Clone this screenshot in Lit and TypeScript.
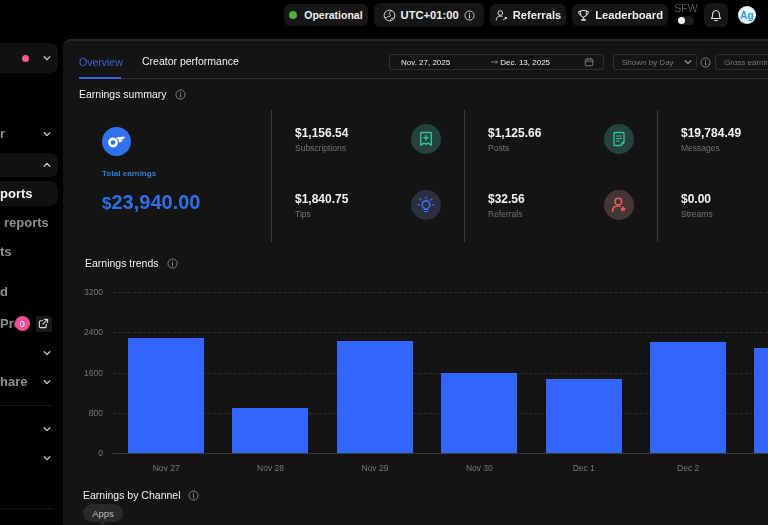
import { LitElement, html, css, svg } from "lit";
import { customElement } from "lit/decorators.js";

const chevDown = html`<svg class="chev" viewBox="0 0 10 10" width="8" height="8"><path d="M1.500 3.500 5 7l3.500-3.500" fill="none" stroke="currentColor" stroke-width="1.600" stroke-linecap="round" stroke-linejoin="round"/></svg>`;
const chevUp = html`<svg class="chev" viewBox="0 0 10 10" width="8" height="8"><path d="M1.500 6.500 5 3l3.500 3.500" fill="none" stroke="currentColor" stroke-width="1.600" stroke-linecap="round" stroke-linejoin="round"/></svg>`;
const info = (s = 11) => html`<svg viewBox="0 0 12 12" width=${s} height=${s} class="info"><circle cx="6" cy="6" r="5" fill="none" stroke="currentColor" stroke-width="1"/><path d="M6 5.400v3" stroke="currentColor" stroke-width="1.100" stroke-linecap="round"/><circle cx="6" cy="3.600" r=".7" fill="currentColor"/></svg>`;

const ICONS: Record<string, unknown> = {
  sub: svg`<path d="M4.500 2.500h9a.8.8 0 0 1 .8.8v11.900l-3-1.900a1 1 0 0 0-1.100 0L9 14.400l-1.200-1.100a1 1 0 0 0-1.100 0l-3 1.900V3.300a.8.8 0 0 1 .8-.8Z" fill="none" stroke="currentColor" stroke-width="1.500" stroke-linejoin="round"/><path d="M9 5.500v4.500M6.800 7.700h4.400" stroke="currentColor" stroke-width="1.500" stroke-linecap="round"/>`,
  post: svg`<path d="M11 15.500H5a1 1 0 0 1-1-1v-11a1 1 0 0 1 1-1h8a1 1 0 0 1 1 1v9Z" fill="none" stroke="currentColor" stroke-width="1.400" stroke-linejoin="round"/><path d="M6.500 6h5M6.500 8.500h5M6.500 11h3" stroke="currentColor" stroke-width="1.200" stroke-linecap="round"/><path d="M11.500 15.500 15 12l-3.500-.2Z" fill="currentColor"/>`,
  tip: svg`<path d="M9 4.800a3.900 3.900 0 0 0-2.300 7c.5.4.7.9.7 1.500h3.200c0-.6.2-1.100.7-1.500a3.900 3.900 0 0 0-2.300-7Z" fill="none" stroke="currentColor" stroke-width="1.400"/><path d="M7.500 15.500h3M9 1v1.500M3 3l1.200 1.200M15 3l-1.200 1.200M1 8.800h1.500M15.500 8.800H17" stroke="currentColor" stroke-width="1.200" stroke-linecap="round"/>`,
  ref: svg`<circle cx="8.300" cy="5.500" r="3.300" fill="none" stroke="currentColor" stroke-width="1.500"/><path d="M2.500 15.500c0-3.600 2.300-5.600 5.300-5.600 1 0 1.700.2 2.300.5" fill="none" stroke="currentColor" stroke-width="1.500" stroke-linecap="round"/><path d="m13 10 1 1.800 1.900.3-1.400 1.300.4 2-1.900-1-1.900 1 .4-2-1.400-1.300 1.900-.3Z" fill="currentColor"/>`,
};

interface Stat { value: string; label: string; icon: string; color: string; bg: string }
const STATS: Stat[] = [
  { value: "$1,156.54", label: "Subscriptions", icon: "sub", color: "#2fc09a", bg: "#26423c" },
  { value: "$1,125.66", label: "Posts", icon: "post", color: "#2fc09a", bg: "#26423c" },
  { value: "$19,784.49", label: "Messages", icon: "", color: "", bg: "" },
  { value: "$1,840.75", label: "Tips", icon: "tip", color: "#3f6df0", bg: "#2a2f42" },
  { value: "$32.56", label: "Referrals", icon: "ref", color: "#ee5a5a", bg: "#463536" },
  { value: "$0.00", label: "Streams", icon: "", color: "", bg: "" },
];

const BARS = [
  { label: "Nov 27", v: 2290 }, { label: "Nov 28", v: 890 }, { label: "Nov 29", v: 2230 },
  { label: "Nov 30", v: 1590 }, { label: "Dec 1", v: 1470 }, { label: "Dec 2", v: 2210 }, { label: "", v: 2090 },
];

interface Row { text?: string; cls?: string; chev?: "d" | "u"; pro?: boolean }
const ROWS: Row[] = [
  { text: "r", chev: "d", cls: "first" },
  { chev: "u", cls: "box" },
  { text: "ports", cls: "box active" },
  { text: "reports", cls: "np" },
  { text: "ts" },
  { text: "d", cls: "far" },
  { text: "Pro", pro: true, cls: "pro-row" },
  { chev: "d" },
  { text: "hare", chev: "d" },
];

@customElement("app-root")
export class AppRoot extends LitElement {
  static styles = css`
    :host { display: block; width: 768px; height: 525px; overflow: hidden; background: #000; color: #fff;
      font-family: "Liberation Sans", Arial, sans-serif; }
    .page { height: 525px; filter: blur(.25px); }
    .top { height: 39px; display: flex; align-items: flex-start; justify-content: flex-end; gap: 6px; padding: 3px 12px 0 0; box-sizing: border-box; }
    .pill { height: 22px; margin-top: 1px; display: flex; align-items: center; gap: 5px; padding: 0 5px; background: #161616; border-radius: 6px; font-size: 11.200px; font-weight: 700; color: #efefef; white-space: nowrap; }
    .pill.tall { height: 24px; margin-top: 0; }
    .pill.status { gap: 7px; font-size: 10.500px; }
    .pill.utc { padding: 0 9px; }
    .pill svg { color: #e5e5e5; flex: none; }
    .pill .info { color: #d0d0d0; }
    .dot { width: 8px; height: 8px; border-radius: 50%; background: #4caf3f; }
    .sfw { width: 24px; display: flex; flex-direction: column; align-items: center; font-size: 10.500px; line-height: 11px; color: #555; font-weight: 400; }
    .toggle { width: 16px; height: 9px; margin-top: 2px; border-radius: 5px; background: #1c1c1c; display: flex; align-items: center; }
    .toggle i { width: 7px; height: 7px; border-radius: 50%; background: #f2f2f2; }
    .bell { width: 24px; height: 24px; justify-content: center; padding: 0; }
    .avatar { width: 18px; height: 18px; border-radius: 50%; background: #eaf6ff; color: #1f9bef; font-size: 10px; font-weight: 700; display: flex; align-items: center; justify-content: center; margin: 3px 0 0 4px; }

    .body { display: flex; height: 486px; }
    .side { width: 63px; flex: none; overflow: hidden; box-sizing: border-box; padding: 4px 5px 0 0; }
    .account { height: 30px; background: #111; border-radius: 0 8px 8px 0; display: flex; align-items: center; justify-content: flex-end; gap: 14px; padding-right: 7px; }
    .pink { width: 7px; height: 7px; border-radius: 50%; background: #ef5b92; }
    .row { height: 25px; margin-top: 4px; display: flex; align-items: center; padding-right: 7px; color: #8f8f8f; font-size: 13px; font-weight: 700; white-space: nowrap; overflow: hidden; }
    .row .chev { margin-left: auto; }
    .row.first { margin-top: 48px; }
    .row.box { height: 24px; margin-top: 7px; background: #111; border-radius: 0 8px 8px 0; }
    .row.active { height: 25px; margin-top: 4px; color: #f4f4f4; }
    .row.np { padding-left: 4px; }
    .row.far { margin-top: 15px; }
    .row.pro-row { margin-top: 7px; overflow: visible; padding-right: 5px; }
    .chev { color: #c9c9c9; flex: none; }
    .pro { display: flex; align-items: center; flex: 1; min-width: 0; }
    .badge { width: 15px; height: 15px; border-radius: 50%; background: #ee4f95; color: #fff; font-size: 9px; font-weight: 400; display: flex; align-items: center; justify-content: center; margin-left: -7px; flex: none; position: relative; }
    .ext { width: 16px; height: 16px; background: #1a1a1a; border-radius: 3px; display: flex; align-items: center; justify-content: center; color: #ddd; margin-left: 6px; flex: none; }
    .sep { height: 1px; background: #161616; margin: 11px 5px 0 0; }
    .sep.low { margin-top: 38px; }
    .side-chevs .row:first-child { margin-top: 10px; }

    .main { flex: 1; min-width: 0; background: #141414; border-radius: 8px 0 0 0; border-top: 2px solid #262626; box-sizing: border-box; overflow: hidden; padding: 0 0 0 16px; }
    .tabbar { height: 37px; width: 689px; display: flex; align-items: center; border-bottom: 1px solid #2e2e2e; font-size: 10.500px; }
    .tab { height: 100%; display: flex; align-items: center; color: #eee; white-space: nowrap; padding-top: 3px; box-sizing: border-box; }
    .tab.on { color: #3a62d8; box-shadow: inset 0 -2px 0 #3a62d8; margin-bottom: -1px; height: calc(100% + 1px); width: 42px; margin-right: 21px; }
    .tab.next { width: 95px; }
    .date { margin-left: 152px; margin-top: 5px; width: 215px; height: 16px; box-sizing: border-box; border: 1px solid #2e2e2e; border-radius: 3px; display: flex; align-items: center; font-size: 8px; color: #eee; padding: 0 9px 0 11px; flex: none; }
    .date .to { margin-left: 41px; display: flex; align-items: center; gap: 1px; }
    .date svg:last-child { margin-left: auto; color: #888; }
    .sel { height: 16px; margin-top: 5px; box-sizing: border-box; border: 1px solid #2e2e2e; border-radius: 3px; display: flex; align-items: center; font-size: 8px; color: #777; padding: 0 4px 0 8px; flex: none; white-space: nowrap; }
    .sel.by { width: 84px; margin-left: 9px; justify-content: space-between; }
    .sel.by .chev { color: #999; }
    .infoBtn { margin: 5px 4px 0 3px; color: #888; display: flex; }
    .sel.gross { width: 80px; overflow: hidden; }
    .title { display: flex; align-items: center; gap: 8px; font-size: 10.500px; color: #f0f0f0; white-space: nowrap; }
    .info { color: #888; flex: none; }
    .sumTitle { height: 16px; margin-top: 7px; }
    .summary { display: flex; margin-top: 8px; height: 132px; }
    .total { width: 192px; flex: none; box-sizing: border-box; padding: 17px 0 0 23px; }
    .logo { display: block; width: 29px; height: 29px; }
    .tl { font-size: 8px; font-weight: 700; color: #2b7fd4; margin-top: 13px; line-height: 10px; white-space: nowrap; }
    .amount { font-size: 20px; font-weight: 700; color: #2f6fe8; margin-top: 11px; line-height: 24px; white-space: nowrap; }
    .amount span { font-size: 17px; }
    .stats { display: grid; grid-template-columns: repeat(3, 193px); flex: none; }
    .stat { border-left: 1px solid #3c3c3c; display: grid; grid-template-rows: 66px 66px; }
    .cell { padding: 14px 0 0 23px; display: flex; justify-content: space-between; box-sizing: border-box; width: 192px; }
    .txt { padding-top: 1px; }
    .val { font-size: 12px; font-weight: 700; color: #f2f2f2; line-height: 17px; white-space: nowrap; }
    .lab { font-size: 8.500px; color: #727272; line-height: 12px; white-space: nowrap; }
    .circle { width: 30px; height: 30px; border-radius: 50%; display: flex; align-items: center; justify-content: center; margin: 0 23px 0 0; flex: none; }

    .trendTitle { height: 16px; margin: 13px 0 0 6px; }
    .chart { position: relative; height: 205px; margin-top: 12px; width: 689px; }
    .grid { position: absolute; left: 34px; right: 0; top: 9px; height: 162px; display: flex; flex-direction: column; justify-content: space-between; }
    .gl { height: 0; border-top: 1px dashed #2e2e2e; }
    .gl.base { border-top: 1px solid #383838; }
    .yaxis { position: absolute; left: 0; top: 3px; width: 24px; height: 173px; display: flex; flex-direction: column; justify-content: space-between; align-items: flex-end; font-size: 8.500px; line-height: 12px; color: #777; }
    .bars { position: absolute; left: 49px; top: 9px; height: 161px; display: flex; align-items: flex-end; gap: 28.400px; }
    .bar { width: 76px; background: #3366ff; flex: none; }
    .xaxis { position: absolute; left: 35px; top: 179px; display: flex; }
    .xaxis span { width: 104.400px; text-align: center; font-size: 8.500px; color: #777; flex: none; line-height: 12px; }
    .chanTitle { height: 14px; margin: 0 0 0 4px; }
    .apps { position: relative; width: 40px; height: 18px; margin: 2px 0 0 4px; border-radius: 9px; background: #292929; color: #b8b8b8; font-size: 9.500px; display: flex; align-items: center; justify-content: center; }
    .apps::after { content: ""; position: absolute; left: 16px; bottom: -3px; border: 4px solid transparent; border-top-color: #292929; border-bottom: 0; }
  `;

  private renderRow(r: Row) {
    return html`<div class="row ${r.cls ?? ""}">
      ${r.pro
        ? html`<div class="pro"><span>${r.text}</span><div class="badge">0</div>
            <div class="ext"><svg viewBox="0 0 12 12" width="11" height="11"><path d="M9 7v2.500a1 1 0 0 1-1 1H2.500a1 1 0 0 1-1-1V4a1 1 0 0 1 1-1H5M7 1.500h3.500V5M10.500 1.500 5.500 6.500" fill="none" stroke="currentColor" stroke-width="1.200" stroke-linecap="round" stroke-linejoin="round"/></svg></div></div>`
        : html`${r.text ? html`<span>${r.text}</span>` : ""}`}
      ${r.chev === "d" ? chevDown : r.chev === "u" ? chevUp : ""}
    </div>`;
  }

  private renderStat(s: Stat) {
    return html`<div class="cell">
      <div class="txt"><div class="val">${s.value}</div><div class="lab">${s.label}</div></div>
      ${s.icon ? html`<div class="circle" style="background:${s.bg};color:${s.color}"><svg viewBox="0 0 18 18" width="18" height="18">${ICONS[s.icon]}</svg></div>` : ""}
    </div>`;
  }

  render() {
    const cols = [0, 1, 2];
    return html`<div class="page">
      <div class="top">
        <div class="pill status"><span class="dot"></span>Operational</div>
        <div class="pill tall utc">
          <svg viewBox="0 0 14 14" width="13" height="13"><circle cx="7" cy="7" r="5.800" fill="none" stroke="currentColor" stroke-width="1"/><path d="M2 9.500c2 .5 2.500-1 3.500-1.500s2 .5 2.500-.5-1.500-2-1-3.500S9 2 9.500 2M8 12.500c0-1.500 1-2.500 2-2.500s2 0 2.300-1" fill="none" stroke="currentColor" stroke-width="1"/></svg>
          UTC+01:00 ${info(11)}
        </div>
        <div class="pill">
          <svg viewBox="0 0 16 16" width="13" height="13"><circle cx="6.500" cy="5" r="2.800" fill="none" stroke="currentColor" stroke-width="1.200"/><path d="M1.500 13.500c0-3 2-4.800 5-4.800 1 0 1.700.2 2.300.5" fill="none" stroke="currentColor" stroke-width="1.200" stroke-linecap="round"/><path d="M10 13.500l4-3M12 10.300l2 .2-.3 2" fill="none" stroke="currentColor" stroke-width="1.200"/></svg>
          Referrals
        </div>
        <div class="pill">
          <svg viewBox="0 0 16 16" width="13" height="13"><path d="M4.500 2h7v4.500a3.500 3.500 0 0 1-7 0ZM4.500 3H2c0 3 1 4.500 3 4.500M11.500 3H14c0 3-1 4.500-3 4.500M8 10v2.500M5.500 14h5l-.6-1.500H6.100Z" fill="none" stroke="currentColor" stroke-width="1.200" stroke-linejoin="round"/></svg>
          Leaderboard
        </div>
        <div class="sfw">SFW<div class="toggle"><i></i></div></div>
        <div class="pill bell tall"><svg viewBox="0 0 14 14" width="14" height="14"><path d="M2.500 10.500c.8-.8 1-1.500 1-3.500 0-2.300 1.500-4.500 3.500-4.500s3.500 2.200 3.500 4.500c0 2 .2 2.700 1 3.500ZM5.800 12.500h2.400" fill="none" stroke="currentColor" stroke-width="1.100" stroke-linejoin="round" stroke-linecap="round"/></svg></div>
        <div class="avatar">Ag</div>
      </div>
      <div class="body">
        <div class="side">
          <div class="account"><span class="pink"></span>${chevDown}</div>
          ${ROWS.map((r) => this.renderRow(r))}
          <div class="sep"></div>
          <div class="side-chevs">
            ${this.renderRow({ chev: "d" })}
            ${this.renderRow({ chev: "d" })}
          </div>
          <div class="sep low"></div>
        </div>
        <div class="main">
          <div class="tabbar">
            <div class="tab on">Overview</div>
            <div class="tab next">Creator performance</div>
            <div class="date">Nov. 27, 2025
              <span class="to">
                <svg viewBox="0 0 10 6" width="8" height="6"><path d="M0 3h8M6 1l2 2-2 2" fill="none" stroke="#bbb" stroke-width=".8"/></svg>
                Dec. 13, 2025</span>
              <svg viewBox="0 0 12 12" width="10" height="10"><rect x="1.500" y="2.500" width="9" height="8" rx="1" fill="none" stroke="currentColor"/><path d="M1.500 5h9M4 1v2M8 1v2" stroke="currentColor"/></svg>
            </div>
            <div class="sel by">Shown by Day ${chevDown}</div>
            <div class="infoBtn">${info(11)}</div>
            <div class="sel gross">Gross earnings</div>
          </div>
          <div class="title sumTitle">Earnings summary ${info(11)}</div>
          <div class="summary">
            <div class="total">
              <svg class="logo" viewBox="0 0 29 29"><circle cx="14.500" cy="14.500" r="14.500" fill="#2f72ee"/><circle cx="11" cy="15.500" r="3.600" fill="none" stroke="#fff" stroke-width="2.600"/><path d="M14 10.500c3-.8 6-1 9-.7-.8 1.800-2.500 3-4.500 3.200h2.500c-.8 1.500-2.300 2.400-4 2.500 0-2-1-4-3-5Z" fill="#fff"/></svg>
              <div class="tl">Total earnings</div>
              <div class="amount"><span>$</span>23,940.00</div>
            </div>
            <div class="stats">
              ${cols.map((c) => html`<div class="stat">${this.renderStat(STATS[c])}${this.renderStat(STATS[c + 3])}</div>`)}
            </div>
          </div>
          <div class="title trendTitle">Earnings trends ${info(11)}</div>
          <div class="chart">
            <div class="grid">
              <div class="gl"></div><div class="gl"></div><div class="gl"></div><div class="gl"></div><div class="gl base"></div>
            </div>
            <div class="yaxis"><span>3200</span><span>2400</span><span>1600</span><span>800</span><span>0</span></div>
            <div class="bars">
              ${BARS.map((b) => html`<div class="bar" style="height:${(b.v / 3200) * 161}px"></div>`)}
            </div>
            <div class="xaxis">${BARS.map((b) => html`<span>${b.label}</span>`)}</div>
          </div>
          <div class="title chanTitle">Earnings by Channel ${info(11)}</div>
          <div class="apps">Apps</div>
        </div>
      </div>
    </div>`;
  }
}
